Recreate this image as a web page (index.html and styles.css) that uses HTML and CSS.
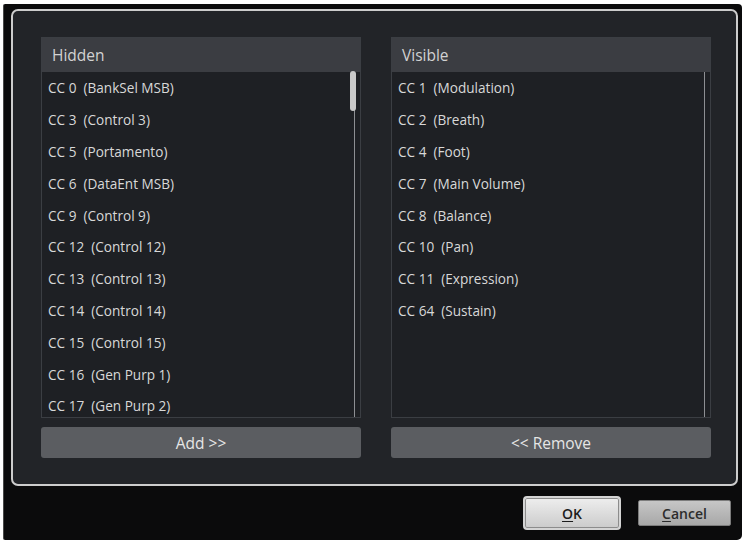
FILE: index.html
```html
<!DOCTYPE html>
<html>
<head>
<meta charset="utf-8">
<link rel="stylesheet" href="styles.css">
</head>
<body>
<div class="window">
  <div class="panel">
    <div class="columns">
      <div class="col">
        <div class="list">
          <div class="list-head">Hidden</div>
          <div class="list-body">
            <div class="rows">
              <div class="row">CC 0  (BankSel MSB)</div>
              <div class="row">CC 3  (Control 3)</div>
              <div class="row">CC 5  (Portamento)</div>
              <div class="row">CC 6  (DataEnt MSB)</div>
              <div class="row">CC 9  (Control 9)</div>
              <div class="row">CC 12  (Control 12)</div>
              <div class="row">CC 13  (Control 13)</div>
              <div class="row">CC 14  (Control 14)</div>
              <div class="row">CC 15  (Control 15)</div>
              <div class="row">CC 16  (Gen Purp 1)</div>
              <div class="row">CC 17  (Gen Purp 2)</div>
            </div>
            <div class="scroll"><div class="thumb"></div></div>
          </div>
        </div>
        <button class="action">Add &gt;&gt;</button>
      </div>
      <div class="col">
        <div class="list">
          <div class="list-head">Visible</div>
          <div class="list-body">
            <div class="rows">
              <div class="row">CC 1  (Modulation)</div>
              <div class="row">CC 2  (Breath)</div>
              <div class="row">CC 4  (Foot)</div>
              <div class="row">CC 7  (Main Volume)</div>
              <div class="row">CC 8  (Balance)</div>
              <div class="row">CC 10  (Pan)</div>
              <div class="row">CC 11  (Expression)</div>
              <div class="row">CC 64  (Sustain)</div>
            </div>
            <div class="scroll"></div>
          </div>
        </div>
        <button class="action">&lt;&lt; Remove</button>
      </div>
    </div>
  </div>
  <div class="footer">
    <button class="btn ok"><u>O</u>K</button>
    <button class="btn cancel"><u>C</u>ancel</button>
  </div>
</div>
</body>
</html>
```

FILE: styles.css
```css
html, body {
  margin: 0;
  padding: 0;
  background: #ffffff;
}

body {
  font-family: "Open Sans", "Noto Sans", sans-serif;
}

.window {
  box-sizing: border-box;
  margin: 4px 0 0 3px;
  width: 739px;
  height: 536px;
  background: #0b0b0c;
  border-left: 1px solid #4a4a4a;
  border-radius: 2px 4px 5px 2px;
  display: flex;
  flex-direction: column;
}

.panel {
  margin: 5px 4px 0 7px;
  border: 2px solid #cdcdcd;
  border-radius: 7px;
  background: #222428;
  padding: 26px 0 26px 28px;
}

.columns {
  display: grid;
  grid-template-columns: 320px 320px;
  column-gap: 30px;
}

.col {
  display: flex;
  flex-direction: column;
}

.list {
  box-sizing: border-box;
  height: 381px;
  border: 1px solid #3b3e43;
  background: #1e2024;
  display: flex;
  flex-direction: column;
  overflow: hidden;
}

.list-head {
  flex: 0 0 34px;
  display: flex;
  align-items: center;
  padding-left: 10px;
  background: #3b3d42;
  color: #d2d2d2;
  font-size: 15.5px;
}

.list-body {
  flex: 1;
  display: flex;
  min-height: 0;
}

.rows {
  flex: 1;
  overflow: hidden;
}

.row {
  height: 31.8px;
  display: flex;
  align-items: center;
  padding-left: 6px;
  white-space: pre;
  color: #d8d8d8;
  font-size: 13.6px;
}

.scroll {
  flex: 0 0 10px;
  background: linear-gradient(to right, transparent 4px, #8d8f93 4px, #8d8f93 5px, transparent 5px);
}

.thumb {
  width: 6px;
  height: 40px;
  margin-top: -1px;
  background: #c9c9c9;
  border-radius: 3px;
}

.action {
  margin-top: 9px;
  height: 31px;
  border: none;
  border-radius: 3px;
  background: #5b5d61;
  color: #e6e6e6;
  font-family: "Open Sans", "Noto Sans", sans-serif;
  font-size: 15.5px;
  padding: 0;
}

.footer {
  flex: 1;
  display: flex;
  justify-content: flex-end;
  align-items: center;
  gap: 17px;
  padding-right: 11px;
}

.btn {
  box-sizing: border-box;
  font-family: "Open Sans", "Noto Sans", sans-serif;
  font-size: 14px;
  font-weight: 600;
  padding: 0;
}

.btn u {
  text-underline-offset: 2px;
}

.ok {
  width: 98px;
  height: 34px;
  border: 2px solid #d4d4d4;
  border-radius: 4px;
  box-shadow: inset 0 0 0 1px #8c8c8c;
  background: linear-gradient(#eeeeee, #cbcbcb);
  color: #1c1c1c;
}

.cancel {
  width: 93px;
  height: 26px;
  border: 1px solid #7c7c7c;
  border-radius: 2px;
  background: linear-gradient(#c6c6c6, #a8a8a8);
  color: #2c2c2c;
}
```
